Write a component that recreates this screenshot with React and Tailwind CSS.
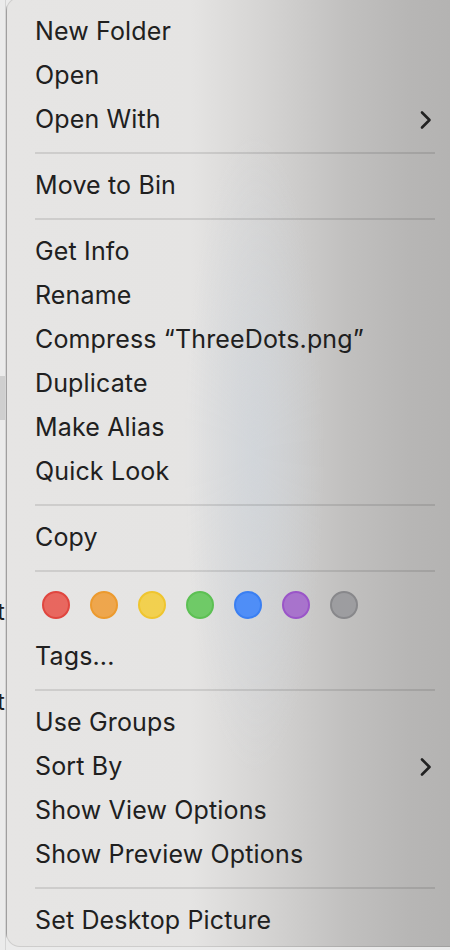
import React from "react";

const Chevron = () => (
  <svg width="12" height="20" viewBox="0 0 12 20" fill="none">
    <path d="M2 2.5 L9.5 10 L2 17.5" stroke="#222" strokeWidth="2.6" strokeLinecap="round" strokeLinejoin="round" />
  </svg>
);

const Item = ({ label, sub }) => (
  <div className="h-[44px] flex items-center justify-between pr-[3px]">
    <span>{label}</span>
    {sub && <Chevron />}
  </div>
);

const Sep = () => (
  <div className="h-[22px] flex items-center">
    <div className="h-[2px] w-full bg-black/10" />
  </div>
);

const dots = [
  "bg-[#e8675f] border-[#e0463f]",
  "bg-[#eea64d] border-[#ec9a2e]",
  "bg-[#f2d04f] border-[#efc52f]",
  "bg-[#6fca67] border-[#5cc053]",
  "bg-[#4f8ef7] border-[#3a7ff2]",
  "bg-[#a873cc] border-[#9a55c8]",
  "bg-[#9d9da0] border-[#88888b]",
];

export default function App() {
  return (
    <div
      className="w-[450px] h-[950px] overflow-hidden flex bg-[#ebebeb] text-[#202020]"
      style={{ fontFamily: "Inter, 'Noto Sans', sans-serif" }}
    >
      <div className="w-[6px] shrink-0 flex flex-col overflow-hidden border-r border-[#d4d4d4] text-[24px] leading-[24px]">
        <div className="h-[376px]" />
        <div className="h-[44px] bg-[#cfcfcf]" />
        <div className="h-[180px]" />
        <div className="-ml-[3px]">t</div>
        <div className="h-[66px]" />
        <div className="-ml-[3px]">t</div>
      </div>
      <div className="-mt-[3px] h-[950px] w-[460px] shrink-0 rounded-l-[14px] border border-black/10 bg-[radial-gradient(ellipse_70px_320px_at_54%_48%,rgba(205,213,222,0.55),transparent),linear-gradient(90deg,#e6e5e4_0%,#e5e4e3_40%,#d3d2d1_58%,#c1c0bf_74%,#b7b6b5_88%,#b3b2b1_100%)] pl-[28px] pr-[30px] pt-[12px] text-[25px] tracking-[0.15px]">
        <Item label="New Folder" />
        <Item label="Open" />
        <Item label="Open With" sub />
        <Sep />
        <Item label="Move to Bin" />
        <Sep />
        <Item label="Get Info" />
        <Item label="Rename" />
        <Item label="Compress “ThreeDots.png”" />
        <Item label="Duplicate" />
        <Item label="Make Alias" />
        <Item label="Quick Look" />
        <Sep />
        <Item label="Copy" />
        <Sep />
        <div className="h-[53px] pt-[9px] pl-[7px] flex gap-[20px] items-start">
          {dots.map((c, i) => (
            <div key={i} className={`w-[28px] h-[28px] rounded-full border-2 ${c}`} />
          ))}
        </div>
        <Item label="Tags..." />
        <Sep />
        <Item label="Use Groups" />
        <Item label="Sort By" sub />
        <Item label="Show View Options" />
        <Item label="Show Preview Options" />
        <Sep />
        <Item label="Set Desktop Picture" />
      </div>
    </div>
  );
}
